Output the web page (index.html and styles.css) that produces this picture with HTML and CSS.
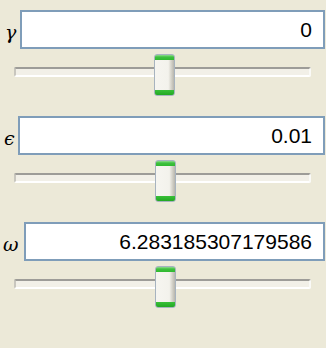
FILE: index.html
```html
<!DOCTYPE html>
<html lang="en">
<head>
    <meta charset="UTF-8">
    <title>Parameters</title>
    <link rel="stylesheet" href="styles.css">
</head>
<body>
    <div class="panel">
        <div class="group">
            <div class="field">
                <span class="label label-gamma">γ</span>
                <div class="value">0</div>
            </div>
            <div class="slider">
                <div class="track"></div>
                <div class="thumb" style="left: 154px"></div>
            </div>
        </div>
        <div class="group">
            <div class="field">
                <span class="label label-eps">ϵ</span>
                <div class="value">0.01</div>
            </div>
            <div class="slider">
                <div class="track"></div>
                <div class="thumb" style="left: 155px"></div>
            </div>
        </div>
        <div class="group">
            <div class="field">
                <span class="label label-omega">ω</span>
                <div class="value">6.283185307179586</div>
            </div>
            <div class="slider">
                <div class="track"></div>
                <div class="thumb" style="left: 155px"></div>
            </div>
        </div>
    </div>
</body>
</html>
```

FILE: styles.css
```css
* {
    box-sizing: border-box;
}

body {
    margin: 0;
    background-color: #ece9d8;
    font-family: "Liberation Sans", Arial, sans-serif;
}

.panel {
    display: flex;
    flex-direction: column;
    gap: 20px;
    padding: 10px 1px 0 0;
}

.group {
    display: flex;
    flex-direction: column;
    gap: 5px;
}

.field {
    display: flex;
    align-items: center;
    height: 39px;
}

.label {
    font-family: "DejaVu Serif", serif;
    font-style: italic;
    font-size: 19px;
    color: #000;
    padding-top: 4px;
    flex: none;
}

.label-gamma {
    width: 20px;
    padding-left: 5px;
}

.label-eps {
    width: 18px;
    padding-left: 4px;
}

.label-omega {
    width: 24px;
    padding-left: 3px;
}

.value {
    flex: 1;
    height: 100%;
    background: #fff;
    border: 2px solid #7f9db9;
    text-align: right;
    font-size: 21px;
    line-height: 35px;
    padding-right: 11px;
    color: #000;
}

.slider {
    position: relative;
    height: 42px;
    padding: 13px 14px 0 14px;
}

.track {
    height: 10px;
    background: #f2f0e8;
    border-top: 2px solid #9d9c98;
    border-bottom: 2px solid #fff;
    border-left: 2px solid #c8c6be;
    border-right: 2px solid #fafaf7;
    border-radius: 2px;
}

.thumb {
    position: absolute;
    top: 0;
    width: 21px;
    height: 42px;
    border: 1px solid #a7b3bf;
    border-radius: 3px;
    background:
        linear-gradient(to bottom, #8fdc8f 0, #3fc13f 2px, #2fb82f 5px, transparent 5px, transparent 35px, #39c039 35px, #22a822 40px),
        linear-gradient(to right, #f6f5f0 0, #f3f2ec 70%, #d6d4cb 85%, #b8b6ad 100%);
}
```
